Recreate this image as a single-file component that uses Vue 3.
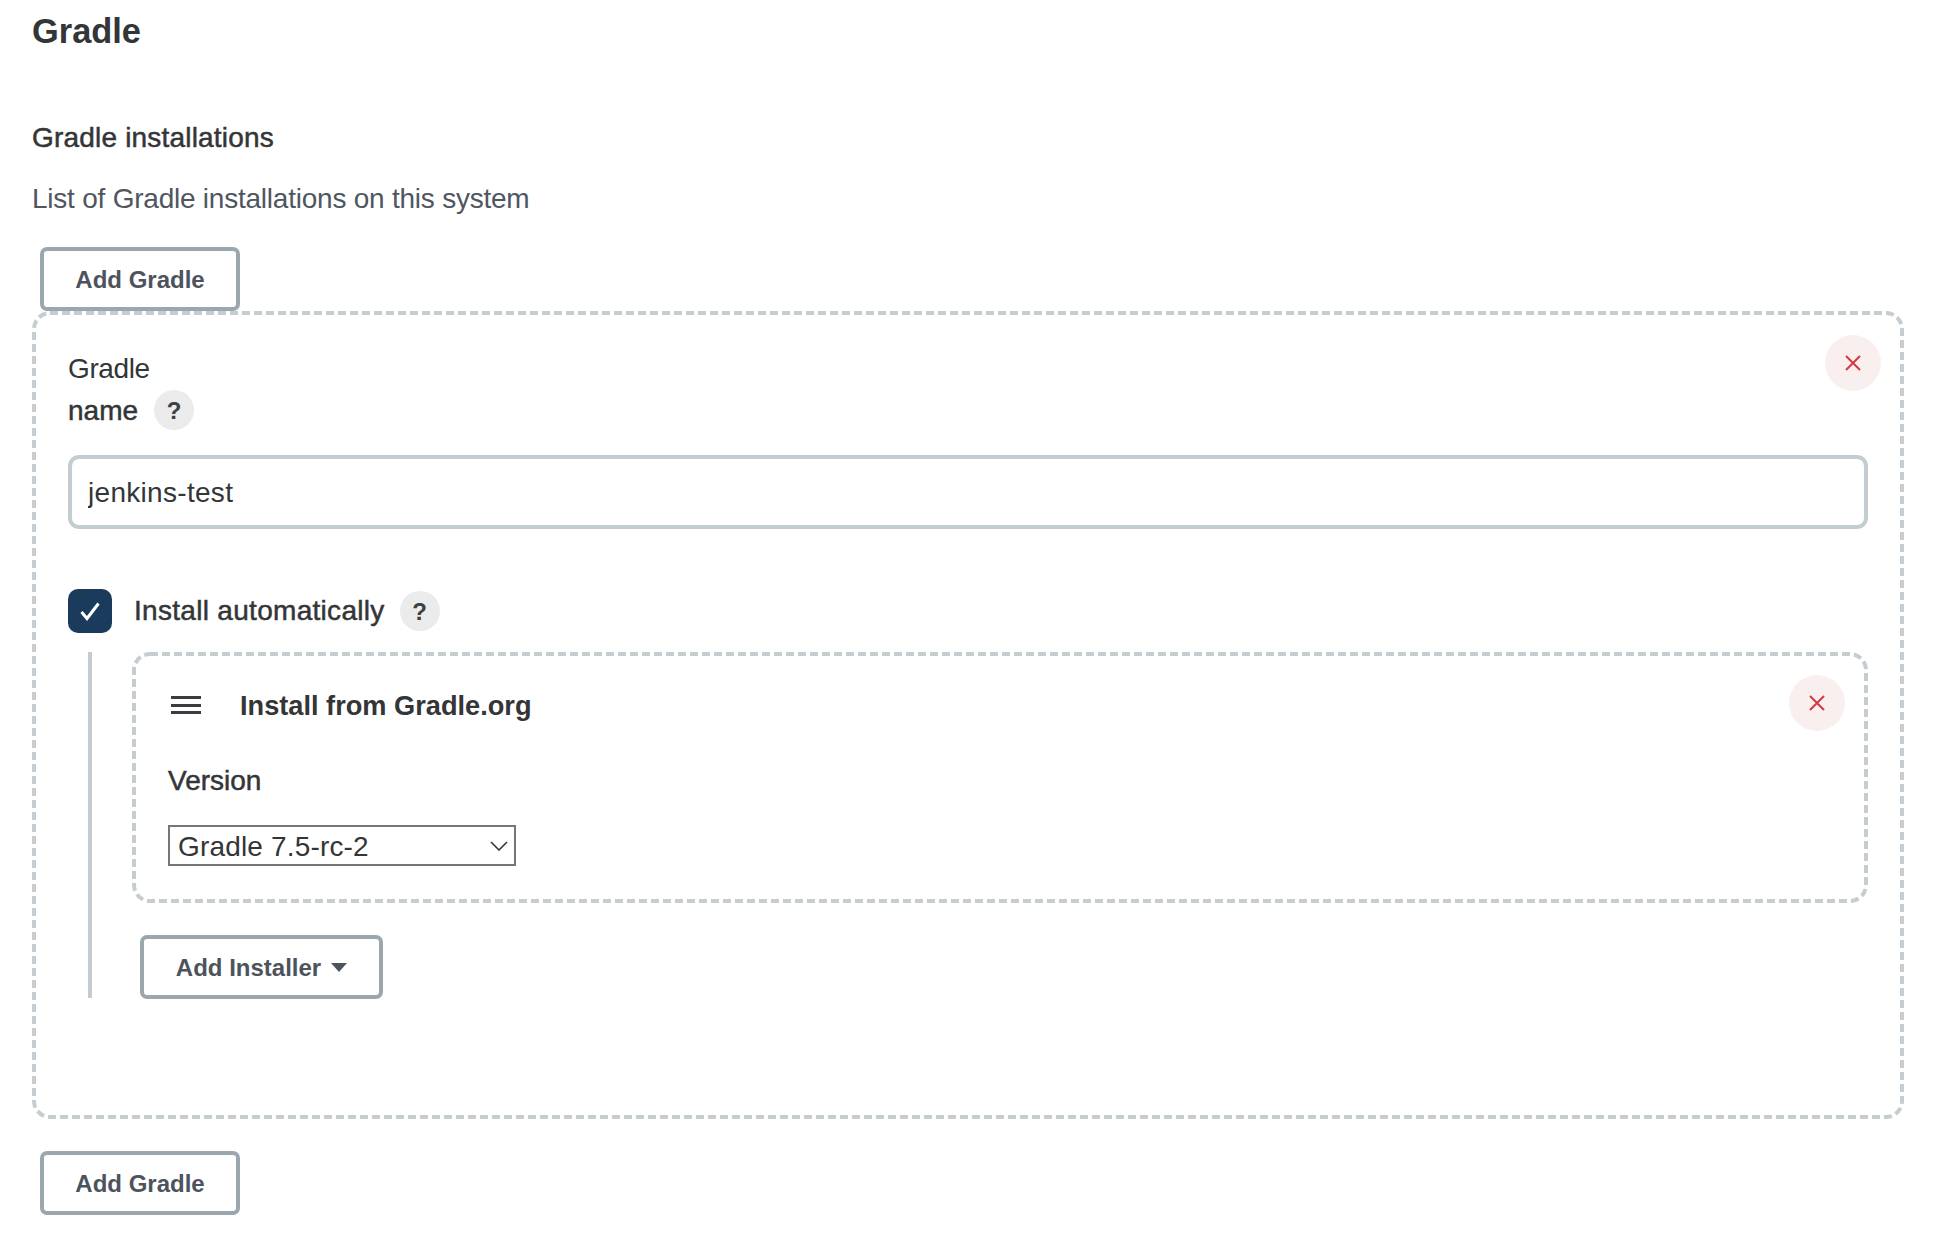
<script setup>
const versions = ['Gradle 7.5-rc-2']
</script>

<template>
  <main class="page">
    <h1 class="title">Gradle</h1>
    <div class="section-label">Gradle installations</div>
    <p class="desc">List of Gradle installations on this system</p>
    <button class="btn btn-top" type="button">Add Gradle</button>

    <section class="repeat">
      <svg class="dash" aria-hidden="true"><rect class="dash-rect" /></svg>
      <button class="close close-outer" type="button" aria-label="Delete">
        <svg width="16" height="16" viewBox="0 0 16 16"><path d="M1 1L15 15M15 1L1 15" /></svg>
      </button>

      <div class="plain">Gradle</div>
      <div class="name-row">
        <span class="medium name-label">name</span>
        <span class="help">?</span>
      </div>
      <input class="text-input" type="text" value="jenkins-test" />

      <div class="check-row">
        <span class="checkbox">
          <svg width="24" height="24" viewBox="0 0 24 24"><path d="M3.5 13L9 19.5L20.5 4.5" /></svg>
        </span>
        <span class="medium check-label">Install automatically</span>
        <span class="help">?</span>
      </div>

      <div class="nested">
        <div class="installer">
          <svg class="dash" aria-hidden="true"><rect class="dash-rect" /></svg>
          <button class="close close-inner" type="button" aria-label="Delete">
            <svg width="16" height="16" viewBox="0 0 16 16"><path d="M1 1L15 15M15 1L1 15" /></svg>
          </button>
          <div class="installer-head">
            <span class="handle"><i></i><i></i><i></i></span>
            <strong class="installer-title">Install from Gradle.org</strong>
          </div>
          <div class="medium version">Version</div>
          <div class="select-wrap">
            <select class="select">
              <option v-for="v in versions" :key="v">{{ v }}</option>
            </select>
            <svg class="chevron" width="18" height="10" viewBox="0 0 18 10"><path d="M1 1L9 9L17 1" /></svg>
          </div>
        </div>
        <button class="btn btn-installer" type="button">
          Add Installer
          <span class="caret"></span>
        </button>
      </div>
    </section>

    <button class="btn btn-bottom" type="button">Add Gradle</button>
  </main>
</template>

<style>
html, body { background: #fff; }
</style>

<style scoped>
.page {
  box-sizing: border-box;
  width: 1948px;
  height: 1240px;
  padding: 11px 44px 0 32px;
  font-family: "Liberation Sans", Arial, sans-serif;
  font-size: 28px;
  line-height: 32px;
  color: #333537;
  overflow: hidden;
}
.title {
  margin: 0;
  font-size: 34.4px;
  line-height: 40px;
  font-weight: 700;
}
.section-label {
  margin-top: 71px;
  letter-spacing: 0.19px;
  -webkit-text-stroke: 0.5px currentColor;
}
.desc {
  margin: 29px 0 0;
  letter-spacing: -0.23px;
  color: #4f5660;
}
.medium { -webkit-text-stroke: 0.5px currentColor; }
.plain { letter-spacing: -0.4px; }
.btn {
  display: flex;
  align-items: center;
  justify-content: center;
  box-sizing: border-box;
  height: 64px;
  background: #fff;
  border: 4px solid #9ba7af;
  border-radius: 7px;
  font: 700 24px/28px "Liberation Sans", Arial, sans-serif;
  color: #4d535c;
  padding: 2px 0 0;
}
.btn-top { width: 200px; margin: 32px 0 0 8px; }
.btn-bottom { width: 200px; margin: 32px 0 0 8px; }
.btn-installer { width: 243px; margin: 32px 0 0 8px; gap: 10px; }
.caret {
  width: 0;
  height: 0;
  margin-top: -2px;
  border-left: 8.5px solid transparent;
  border-right: 8.5px solid transparent;
  border-top: 9px solid #4d535c;
}
.repeat {
  position: relative;
  box-sizing: border-box;
  height: 808px;
  padding: 42px 36px 0;
}
.dash {
  position: absolute;
  inset: 0;
  width: 100%;
  height: 100%;
  pointer-events: none;
}
.dash-rect {
  x: 2px;
  y: 2px;
  width: calc(100% - 4px);
  height: calc(100% - 4px);
  rx: 16px;
  ry: 16px;
  fill: none;
  stroke: #c5cdd1;
  stroke-width: 4px;
  stroke-dasharray: 8 4;
}
.close {
  position: absolute;
  display: flex;
  align-items: center;
  justify-content: center;
  width: 56px;
  height: 56px;
  padding: 0;
  border: 0;
  border-radius: 50%;
  background: #f9efef;
}
.close path { stroke: #d33a3f; stroke-width: 2; fill: none; }
.close-outer { top: 24px; right: 23px; }
.close-inner { top: 23px; right: 23px; }
.name-row {
  display: flex;
  align-items: center;
  gap: 16px;
  height: 40px;
  margin-top: 5px;
}
.name-label { padding-top: 2px; }
.help {
  display: flex;
  align-items: center;
  justify-content: center;
  box-sizing: border-box;
  width: 40px;
  height: 40px;
  padding-top: 1px;
  border-radius: 50%;
  background: #ebebec;
  font-size: 24px;
  font-weight: 700;
  color: #3d4044;
}
.text-input {
  display: block;
  box-sizing: border-box;
  width: 100%;
  height: 74px;
  margin-top: 25px;
  padding: 2px 16px 0;
  border: 4px solid #c3ccd1;
  border-radius: 11px;
  background: #fff;
  font: 28px "Liberation Sans", Arial, sans-serif;
  letter-spacing: 0.3px;
  color: #333537;
  outline: none;
}
.check-row {
  display: flex;
  align-items: center;
  height: 44px;
  margin-top: 60px;
}
.checkbox {
  display: flex;
  align-items: center;
  justify-content: center;
  width: 44px;
  height: 44px;
  border-radius: 10px;
  background: #1b3b5c;
}
.checkbox path { stroke: #fff; stroke-width: 3; fill: none; }
.check-label {
  margin: 0 15px 0 22px;
  letter-spacing: 0.3px;
}
.nested {
  margin: 19px 0 0 20px;
  padding-left: 40px;
  border-left: 4px solid #c3ccd1;
  height: 346px;
  box-sizing: border-box;
}
.installer {
  position: relative;
  box-sizing: border-box;
  height: 251px;
  padding: 37px 36px 0;
}
.installer-head {
  display: flex;
  align-items: center;
  gap: 39px;
  height: 32px;
}
.handle {
  display: flex;
  flex-direction: column;
  gap: 4.5px;
  width: 30px;
  margin-left: 3px;
}
.handle i {
  display: block;
  height: 3px;
  background: #3a3c3f;
}
.installer-title {
  padding-top: 2px;
  font-weight: 700;
  font-size: 27.2px;
}
.version { margin-top: 44px; }
.select-wrap {
  position: relative;
  width: 348px;
  height: 41px;
  margin-top: 28px;
}
.select {
  display: block;
  appearance: none;
  box-sizing: border-box;
  width: 100%;
  height: 100%;
  padding: 2px 0 0 8px;
  border: 2px solid #767676;
  border-radius: 0;
  background: #fff;
  font: 28px "Liberation Sans", Arial, sans-serif;
  letter-spacing: 0.17px;
  color: #333537;
}
.chevron {
  position: absolute;
  top: 16px;
  right: 8px;
  pointer-events: none;
}
.chevron path { stroke: #333537; stroke-width: 1.6; fill: none; }
</style>
